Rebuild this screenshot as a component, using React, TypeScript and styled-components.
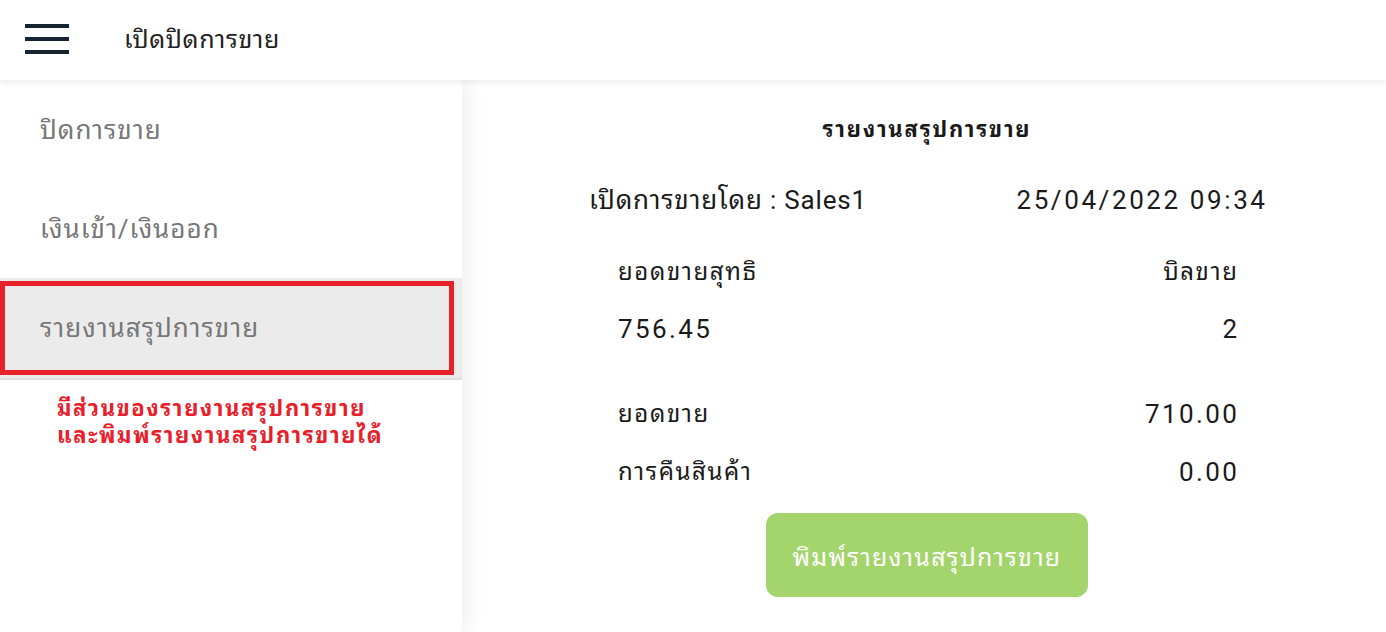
import React from "react";
import styled, { createGlobalStyle } from "styled-components";

const Global = createGlobalStyle`
  html, body { margin: 0; padding: 0; background: #fff; }
  body { font-family: Roboto, "Noto Sans Thai Looped", "Noto Sans Thai", "Noto Sans", "Liberation Sans", sans-serif; }
  * { box-sizing: border-box; }
`;

const Page = styled.div`
  width: 1386px;
  height: 632px;
  display: flex;
  flex-direction: column;
  overflow: hidden;
  background: #fff;
`;

const Header = styled.header`
  height: 80px;
  flex: none;
  display: flex;
  align-items: center;
  background: #fff;
  box-shadow: 0 2px 7px rgba(0, 0, 0, 0.09);
  position: relative;
  z-index: 2;
`;

const MenuButton = styled.button`
  width: 44px;
  height: 30px;
  margin-left: 25px;
  margin-top: -2px;
  padding: 0;
  border: none;
  background: none;
  display: flex;
  flex-direction: column;
  justify-content: space-between;
`;

const Bar = styled.span`
  display: block;
  height: 4px;
  background: #17232e;
`;

const HeaderTitle = styled.h1`
  margin: 0 0 0 55px;
  font-size: 25px;
  line-height: 32px;
  letter-spacing: 0.6px;
  font-weight: 400;
  color: #222;
`;

const Body = styled.div`
  flex: 1;
  display: grid;
  grid-template-columns: 462px 1fr;
  min-height: 0;
`;

const Sidebar = styled.nav`
  background: #fff;
  box-shadow: 3px 0 22px rgba(0, 0, 0, 0.08);
  position: relative;
  z-index: 1;
`;

const NavItem = styled.div<{ $active?: boolean; $h: number }>`
  height: ${(p) => p.$h}px;
  display: flex;
  align-items: center;
  padding-left: ${(p) => (p.$active ? "35px" : "40px")};
  font-size: 26px;
  line-height: 34px;
  letter-spacing: 1px;
  color: #777;
  background: ${(p) => (p.$active ? "#ebebeb" : "#fff")};
  border: ${(p) => (p.$active ? "5px solid #e8202a" : "none")};
`;

const ActiveWrap = styled.div`
  padding: 3px 8px 3px 0;
  background: #ebebeb;
  border-bottom: 2px solid #e0e0e0;
`;

const Note = styled.p`
  margin: 15px 0 0 57px;
  font-size: 22px;
  letter-spacing: 1.6px;
  line-height: 27px;
  font-weight: 700;
  color: #e8202a;
`;

const Main = styled.main`
  display: flex;
  flex-direction: column;
  align-items: center;
`;

const Report = styled.div`
  width: 676px;
  display: flex;
  flex-direction: column;
  margin-left: 6px;
`;

const ReportTitle = styled.h2`
  margin: 34px 0 0;
  height: 32px;
  line-height: 32px;
  text-align: center;
  font-size: 22px;
  letter-spacing: 1.8px;
  font-weight: 700;
  color: #1a1a1a;
`;

const InfoRow = styled.div`
  margin-top: 34px;
  height: 40px;
  line-height: 40px;
  display: flex;
  justify-content: space-between;
  font-size: 26px;
  color: #1a1a1a;
`;

const InfoText = styled.span<{ $spacing: number }>`
  letter-spacing: ${(p) => p.$spacing}px;
  margin-right: ${(p) => -p.$spacing}px;
`;

const Row = styled.div<{ $top: number }>`
  margin-top: ${(p) => p.$top}px;
  height: 40px;
  line-height: 40px;
  padding: 0 28px 0 29px;
  display: flex;
  justify-content: space-between;
  color: #1a1a1a;
`;

const Value = styled.span`
  font-size: 26px;
  letter-spacing: 2.4px;
  margin-right: -2.4px;
`;

const Label = styled.span`
  font-size: 24px;
  letter-spacing: 1.6px;
  margin-right: -1.6px;
`;

const PrintButton = styled.button`
  align-self: center;
  margin-top: 21px;
  width: 322px;
  height: 84px;
  border: none;
  border-radius: 12px;
  background: #a3d56c;
  color: #fff;
  font-family: inherit;
  font-size: 25px;
  letter-spacing: 1.2px;
`;

export default function App() {
  return (
    <Page>
      <Global />
      <Header>
        <MenuButton aria-label="menu">
          <Bar />
          <Bar />
          <Bar />
        </MenuButton>
        <HeaderTitle>เปิดปิดการขาย</HeaderTitle>
      </Header>
      <Body>
        <Sidebar>
          <NavItem $h={100}>ปิดการขาย</NavItem>
          <NavItem $h={98}>เงินเข้า/เงินออก</NavItem>
          <ActiveWrap>
            <NavItem $active $h={94}>
              รายงานสรุปการขาย
            </NavItem>
          </ActiveWrap>
          <Note>
            มีส่วนของรายงานสรุปการขาย
            <br />
            และพิมพ์รายงานสรุปการขายได้
          </Note>
        </Sidebar>
        <Main>
          <Report>
            <ReportTitle>รายงานสรุปการขาย</ReportTitle>
            <InfoRow>
              <InfoText $spacing={0.8}>เปิดการขายโดย : Sales1</InfoText>
              <InfoText $spacing={2.6}>25/04/2022 09:34</InfoText>
            </InfoRow>
            <Row $top={32}>
              <Label>ยอดขายสุทธิ</Label>
              <Label>บิลขาย</Label>
            </Row>
            <Row $top={17}>
              <Value>756.45</Value>
              <Value>2</Value>
            </Row>
            <Row $top={45}>
              <Label>ยอดขาย</Label>
              <Value>710.00</Value>
            </Row>
            <Row $top={18}>
              <Label>การคืนสินค้า</Label>
              <Value>0.00</Value>
            </Row>
            <PrintButton>พิมพ์รายงานสรุปการขาย</PrintButton>
          </Report>
        </Main>
      </Body>
    </Page>
  );
}
